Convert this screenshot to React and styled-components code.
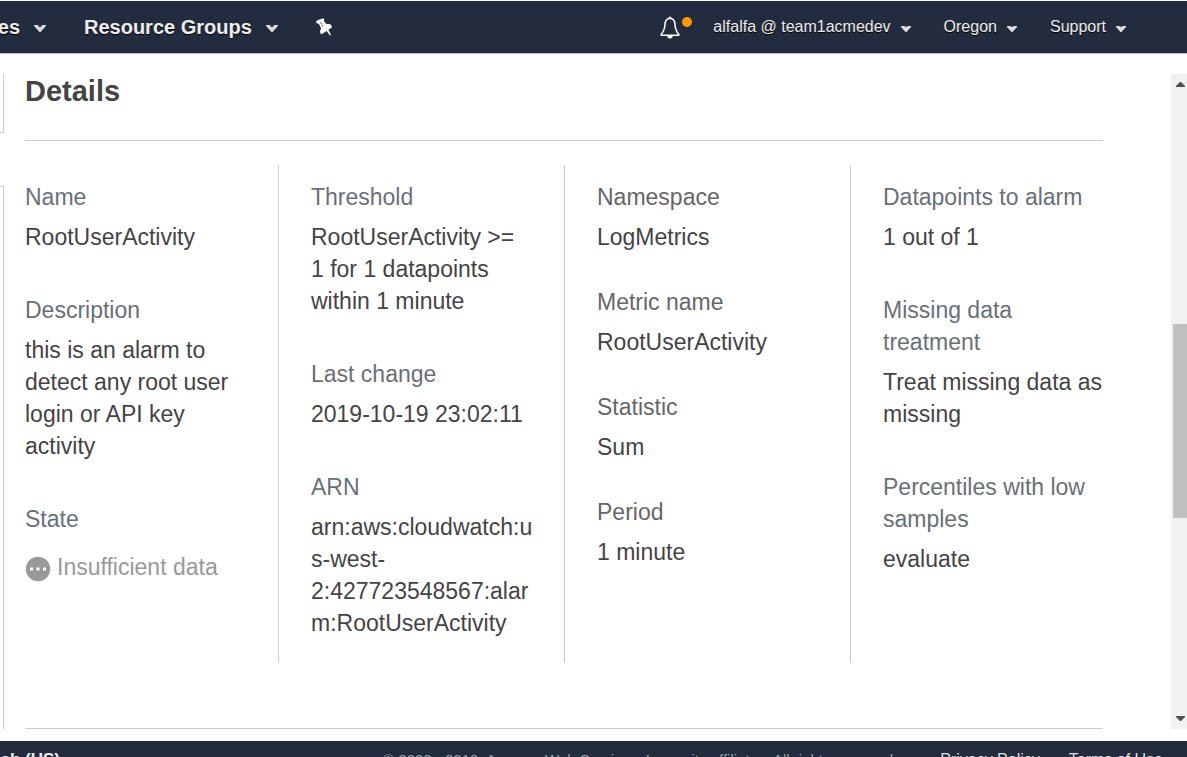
import React from "react";
import styled, { createGlobalStyle } from "styled-components";

const GlobalStyle = createGlobalStyle`
  *, *::before, *::after { box-sizing: border-box; }
  body {
    margin: 0;
    background: #fff;
    color: #444;
    font-family: "Liberation Sans", Arial, sans-serif;
  }
`;

const Page = styled.div`
  height: 100vh;
  overflow: hidden;
  padding-top: 1px;
`;

const Header = styled.header`
  display: flex;
  justify-content: space-between;
  height: 53px;
  padding-right: 61px;
  background: #232c3e;
  border-bottom: 1px solid #c3c5ca;
`;

const NavGroup = styled.nav`
  display: flex;
  align-items: center;
  gap: ${(p) => p.$gap}px;
`;

const ClippedStart = styled.div`
  display: flex;
  flex: none;
  justify-content: flex-end;
  width: ${(p) => p.$width}px;
  overflow: hidden;
`;

const NavButton = styled.button`
  display: flex;
  flex: none;
  align-items: center;
  gap: ${(p) => (p.$bold ? 14 : 10)}px;
  padding: 0;
  border: 0;
  background: none;
  color: #eee;
  font: ${(p) => (p.$bold ? "bold 20px" : "16px")} / 24px "Liberation Sans", Arial, sans-serif;
  text-shadow: 0 1px 0 #000;
  white-space: nowrap;
  cursor: pointer;
`;

const IconButton = styled.button`
  display: flex;
  padding: 0;
  border: 0;
  background: none;
  cursor: pointer;
`;

const Caret = styled.svg`
  display: block;
  margin-top: 3px;
  fill: #ddd;
`;

const Body = styled.main`
  display: flex;
  margin-top: 20px;
`;

const SidePanels = styled.div`
  display: flex;
  flex: none;
  flex-direction: column;
  gap: 53px;
  width: 4px;
`;

const SidePanel = styled.div`
  flex: ${(p) => (p.$first ? "0 0 59px" : "1")};
  border-right: 1px solid #ccc;
  border-top: ${(p) => (p.$first ? "0" : "1px solid #ccc")};
  border-bottom: ${(p) => (p.$first ? "1px solid #ccc" : "0")};
`;

const Details = styled.section`
  flex: 1;
  min-width: 0;
  margin: 0 68px 0 21px;
  border-bottom: 1px solid #ccc;
`;

const Title = styled.h2`
  margin: 0 0 24px;
  padding-bottom: 32px;
  border-bottom: 1px solid #ccc;
  color: #444;
  font-size: 29px;
  line-height: 34px;
`;

const Columns = styled.div`
  display: grid;
  grid-template-columns: 253fr 286fr 286fr 253fr;
  margin-bottom: 65px;
`;

const Column = styled.dl`
  display: flex;
  flex-direction: column;
  gap: ${(p) => (p.$tight ? 33 : 41)}px;
  min-width: 0;
  margin: 0;
  padding: 16px 31px 24px 32px;
  border-left: 1px solid #ccc;

  &:first-child {
    padding-left: 0;
    border-left: 0;
  }
  &:last-child {
    padding-right: 0;
  }
`;

const Field = styled.div`
  display: flex;
  flex-direction: column;
  gap: ${(p) => (p.$status ? 16 : 8)}px;
  font-size: 23px;
  line-height: 32px;
`;

const Label = styled.dt`
  color: ${(p) => (p.$neutral ? "#666" : "#687078")};
  max-width: 210px;
`;

const Value = styled.dd`
  margin: 0;
  overflow-wrap: break-word;
`;

const Status = styled.span`
  display: flex;
  align-items: center;
  gap: 6px;
  color: #999;
  white-space: nowrap;
`;

const StatusIcon = styled.svg`
  flex: none;
  margin-top: 3px;
`;

const Scrollbar = styled.div`
  display: flex;
  flex: none;
  flex-direction: column;
  width: 16px;
  background: #f1f1f1;
`;

const ScrollArrow = styled.button`
  display: flex;
  align-items: center;
  justify-content: flex-end;
  height: 21px;
  padding: 0 2px 0 0;
  border: 0;
  background: none;
`;

const Track = styled.div`
  flex: ${(p) => p.$grow};
`;

const Thumb = styled.div`
  flex: 194;
  margin-left: 2px;
  background: #c1c1c1;
`;

const Footer = styled.footer`
  display: flex;
  justify-content: space-between;
  margin-top: 12px;
  padding: 9px 24px 12px 0;
  background: #232c3e;
  line-height: 20px;
  white-space: nowrap;
`;

const Language = styled.button`
  flex: none;
  padding: 0;
  border: 0;
  background: none;
  color: #eee;
  font: bold 17px / 20px "Liberation Sans", Arial, sans-serif;
`;

const Legal = styled.div`
  display: flex;
  gap: 29px;
  color: #95a5a6;
  font-size: 15px;
`;

const Copyright = styled.span`
  margin-right: 14px;
`;

const FooterLink = styled.a`
  color: #ddd;
  font-size: 16px;
  text-decoration: none;
`;

const BigCaret = () => (
  <Caret width="12" height="7" viewBox="0 0 12 7" aria-hidden="true">
    <path d="M0 0h3.600L6 2.600 8.400 0H12v1L6.500 7h-1L0 1z" />
  </Caret>
);

const SmallCaret = () => (
  <Caret width="10" height="6" viewBox="0 0 10 6" aria-hidden="true">
    <path d="M0 0h3L5 1 7 0h3v1L5.500 6h-1L0 1z" />
  </Caret>
);

const PinIcon = () => (
  <svg width="17" height="18" viewBox="0 0 17 18" aria-hidden="true">
    <path
      fill="#fff"
      d="M0 4 1 2.500 7 .2 8.300 1 7.800 3 10.500 6H14l2 2.500-.5 1.300-3.100 2L15 17l-1 .4L10.600 13 6 16l-1.400-.2L4 13l1.200-2.500L2.800 5.800.5 5.200z"
    />
    <path stroke="#232c3e" strokeWidth="0.800" strokeDasharray="2.200 0.600" d="M4.500 4.200 7 9" />
  </svg>
);

const BellIcon = () => (
  <svg width="33" height="24" viewBox="0 -1 33 24" fill="none" aria-hidden="true">
    <path
      d="M10 2.300C6.600 2.500 5.200 5 5 8.500 4.800 13 4.300 14.800 1.200 18.200v1h17.600v-1C15.700 14.800 15.200 13 15 8.500 14.800 5 13.400 2.500 10 2.300z"
      stroke="#fff"
      strokeWidth="1.500"
      strokeLinejoin="round"
    />
    <path d="M8.800.8h2.400v2H8.800zM7 19.500h6c-.3 2-1.400 3-3 3s-2.700-1-3-3z" fill="#fff" />
    <circle cx="27" cy="6" r="5" fill="#ff9900" />
  </svg>
);

const DotsIcon = () => (
  <StatusIcon width="26" height="26" viewBox="0 0 26 26" aria-hidden="true">
    <circle cx="13" cy="13" r="12.200" fill="#999" />
    <path fill="#fff" d="M5 11.500h3v3H5zM11.500 11.500h3v3h-3zM18 11.500h3v3h-3z" />
  </StatusIcon>
);

const columns = [
  {
    fields: [
      ["Name", "RootUserActivity"],
      ["Description", "this is an alarm to detect any root user login or API key activity"],
      ["State", "Insufficient data", "status"],
    ],
  },
  {
    fields: [
      ["Threshold", "RootUserActivity >= 1 for 1 datapoints within 1 minute"],
      ["Last change", "2019-10-19 23:02:11"],
      ["ARN", "arn:aws:cloudwatch:us-west-2:427723548567:alarm:RootUserActivity"],
    ],
  },
  {
    tight: true,
    fields: [
      ["Namespace", "LogMetrics"],
      ["Metric name", "RootUserActivity"],
      ["Statistic", "Sum"],
      ["Period", "1 minute"],
    ],
  },
  {
    fields: [
      ["Datapoints to alarm", "1 out of 1"],
      ["Missing data treatment", "Treat missing data as missing"],
      ["Percentiles with low samples", "evaluate"],
    ],
  },
];

export default function App() {
  return (
    <Page>
      <GlobalStyle />
      <Header>
        <NavGroup $gap={38}>
          <ClippedStart $width={46}>
            <NavButton $bold>
              Services
              <BigCaret />
            </NavButton>
          </ClippedStart>
          <NavButton $bold>
            Resource Groups
            <BigCaret />
          </NavButton>
          <IconButton aria-label="Pin shortcuts">
            <PinIcon />
          </IconButton>
        </NavGroup>
        <NavGroup $gap={20}>
          <IconButton aria-label="Notifications">
            <BellIcon />
          </IconButton>
          <NavGroup as="div" $gap={33}>
            {["alfalfa @ team1acmedev", "Oregon", "Support"].map((name) => (
              <NavButton key={name}>
                {name}
                <SmallCaret />
              </NavButton>
            ))}
          </NavGroup>
        </NavGroup>
      </Header>
      <Body>
        <SidePanels>
          <SidePanel $first />
          <SidePanel />
        </SidePanels>
        <Details>
          <Title>Details</Title>
          <Columns>
            {columns.map((column, i) => (
              <Column key={i} $tight={column.tight}>
                {column.fields.map(([label, value, kind]) => (
                  <Field key={label} $status={kind === "status"}>
                    <Label $neutral={column.tight}>{label}</Label>
                    <Value>
                      {kind === "status" ? (
                        <Status>
                          <DotsIcon />
                          {value}
                        </Status>
                      ) : (
                        value
                      )}
                    </Value>
                  </Field>
                ))}
              </Column>
            ))}
          </Columns>
        </Details>
        <Scrollbar>
          <ScrollArrow aria-label="Scroll up">
            <svg width="9" height="5" viewBox="0 0 9 5">
              <path fill="#505050" d="M0 5v-1L4 0h1l4 4v1z" />
            </svg>
          </ScrollArrow>
          <Track $grow={229} />
          <Thumb />
          <Track $grow={190} />
          <ScrollArrow aria-label="Scroll down">
            <svg width="9" height="5" viewBox="0 0 9 5">
              <path fill="#505050" d="M0 0v1l4 4h1l4-4V0z" />
            </svg>
          </ScrollArrow>
        </Scrollbar>
      </Body>
      <Footer>
        <ClippedStart $width={60}>
          <Language>English (US)</Language>
        </ClippedStart>
        <Legal>
          <Copyright>
            © 2008 - 2019, Amazon Web Services, Inc. or its affiliates. All rights reserved.
          </Copyright>
          <FooterLink href="#privacy">Privacy Policy</FooterLink>
          <FooterLink href="#terms">Terms of Use</FooterLink>
        </Legal>
      </Footer>
    </Page>
  );
}
